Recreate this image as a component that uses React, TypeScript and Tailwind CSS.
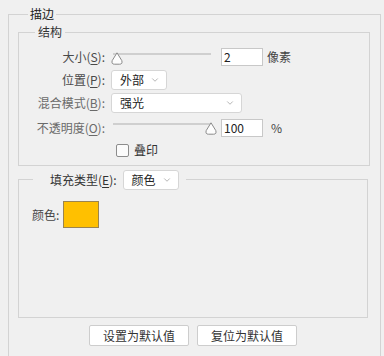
import { ChevronDown } from "lucide-react"

const font = { fontFamily: '"Noto Sans CJK SC", "Noto Sans", sans-serif' }

function Key({ k }: { k: string }) {
  return <span className="underline underline-offset-2">{k}</span>
}

function Thumb() {
  return (
    <svg width="12" height="13" viewBox="0 0 12 13" className="block">
      <path
        d="M6 0.8 L10.8 8.6 Q11.8 12.2 8.6 12.2 H3.4 Q0.2 12.2 1.2 8.6 Z"
        fill="#fdfdfd"
        stroke="#8a8a8a"
        strokeWidth="1"
      />
    </svg>
  )
}

function Slider({ value }: { value: number }) {
  return (
    <div className="relative w-[106px] h-[14px]">
      <div className="absolute left-[2px] right-[6px] top-[1px] h-[2px] bg-[#cfcfcf]" />
      <div className="absolute top-0" style={{ left: `${(value / 100) * 94}px` }}>
        <Thumb />
      </div>
    </div>
  )
}

function NumBox({ value }: { value: string }) {
  return (
    <div className="w-[42px] h-[18px] bg-white border border-[#c8c8c8] pl-[2px] text-[12px] leading-[16px] text-[#222]">
      {value}
    </div>
  )
}

function Select({ value, w }: { value: string; w: string }) {
  return (
    <div className={`${w} h-[20px] bg-white border border-[#d6d6d6] rounded-[3px] flex items-center justify-between pl-[8px] pr-[6px] text-[12px] text-[#222]`}>
      <span className="leading-[18px]">{value}</span>
      <ChevronDown className="h-[10px] w-[10px] text-[#8a8a8a]" strokeWidth={1.5} />
    </div>
  )
}

export default function App() {
  return (
    <div className="w-[384px] h-[356px] overflow-hidden bg-[#f0f0f0] pl-[8px] pr-[3px] pt-[6px] text-[12px]" style={font}>
      <fieldset className="border border-[#d3d3d3] h-[362px]">
        <legend className="ml-[19px] px-[2px] leading-[16px] text-[#222]">描边</legend>

        {/* 结构 */}
        <fieldset className="mt-[2px] ml-[9px] mr-[10px] border border-[#d3d3d3]">
          <legend className="ml-[16px] px-[3px] leading-[16px] text-[#333]">结构</legend>
          <div className="pt-[6px] pb-[8px] text-[#4a4a4a]">
            <div className="flex items-center h-[22px]">
              <div className="w-[86px] text-right">大小(<Key k="S" />):</div>
              <div className="ml-[6px] pt-[3px]">
                <Slider value={0} />
              </div>
              <div className="ml-[4px]">
                <NumBox value="2" />
              </div>
              <span className="ml-[4px] text-[#444]">像素</span>
            </div>
            <div className="flex items-center h-[22px] mt-[1px]">
              <div className="w-[86px] text-right">位置(<Key k="P" />):</div>
              <div className="ml-[6px]">
                <Select value="外部" w="w-[56px]" />
              </div>
            </div>
            <div className="flex items-center h-[22px] mt-[1px]">
              <div className="w-[86px] text-right text-[#6a6a6a]">混合模式(<Key k="B" />):</div>
              <div className="ml-[6px]">
                <Select value="强光" w="w-[131px]" />
              </div>
            </div>
            <div className="flex items-center h-[22px] mt-[3px]">
              <div className="w-[86px] text-right text-[#6a6a6a]">不透明度(<Key k="O" />):</div>
              <div className="ml-[6px] pt-[1px]">
                <Slider value={100} />
              </div>
              <div className="ml-[4px]">
                <NumBox value="100" />
              </div>
              <span className="ml-[8px] text-[#444]">%</span>
            </div>
            <div className="flex items-center h-[14px] mt-[4px] pl-[97px]">
              <div className="w-[13px] h-[13px] bg-[#fbfbfb] border border-[#8c8c8c] rounded-[2px]" />
              <span className="ml-[5px] text-[#333]">叠印</span>
            </div>
          </div>
        </fieldset>

        {/* 填充类型 */}
        <fieldset className="mt-[4px] ml-[9px] mr-[12px] border border-[#d3d3d3]">
          <legend className="ml-[14px] pl-[17px] pr-[7px]">
            <div className="flex items-center h-[19px]">
              <span className="text-[#333]">填充类型(<Key k="E" />):</span>
              <div className="ml-[6px]">
                <Select value="颜色" w="w-[56px]" />
              </div>
            </div>
          </legend>
          <div className="h-[128px] pt-[12px] pl-[13px]">
            <div className="flex items-center">
              <span className="text-[#444]">颜色:</span>
              <div className="ml-[4px] w-[36px] h-[27px] bg-[#ffc000] border border-[#9a8450]" />
            </div>
          </div>
        </fieldset>

        <div className="flex justify-center gap-[8px] mt-[7px] pr-[3px]">
          <button className="w-[100px] h-[21px] bg-white border border-[#cdcdcd] rounded-[2px] text-[12px] leading-[19px] text-[#333]">
            设置为默认值
          </button>
          <button className="w-[100px] h-[21px] bg-white border border-[#cdcdcd] rounded-[2px] text-[12px] leading-[19px] text-[#333]">
            复位为默认值
          </button>
        </div>
      </fieldset>
    </div>
  )
}
